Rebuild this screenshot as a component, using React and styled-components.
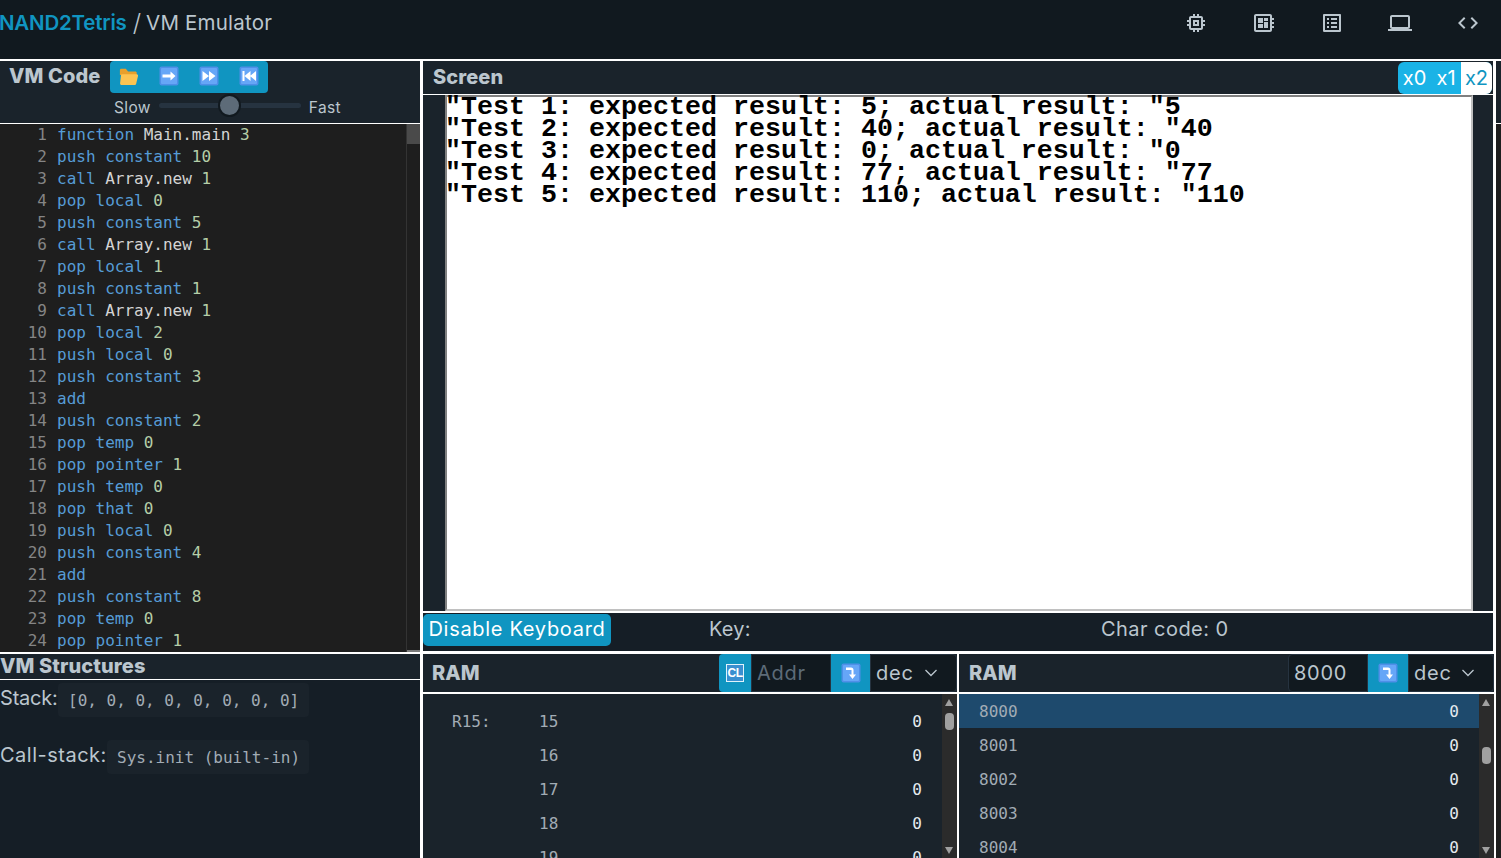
import React from 'react';
import styled, { createGlobalStyle } from 'styled-components';
import {
  MdOutlineMemory, MdOutlineDeveloperBoard, MdOutlineListAlt, MdOutlineLaptop, MdCode,
} from 'react-icons/md';

const UI_FONT = '"Inter", "Noto Sans", sans-serif';
const MONO_FONT = '"DejaVu Sans Mono", "Liberation Mono", monospace';

const GlobalStyle = createGlobalStyle`
  html, body { margin: 0; padding: 0; height: 100%; overflow: hidden; background: #fff; }
  * { box-sizing: border-box; }
  body { font-family: ${UI_FONT}; color: #bbc6ce; }
`;

const Page = styled.div`
  width: 1501px;
  height: 858px;
  display: flex;
  flex-direction: column;
  gap: 2px;
  background: #fff;
  overflow: hidden;
`;

const Header = styled.header`
  height: 59px;
  flex: none;
  display: flex;
  justify-content: space-between;
  align-items: center;
  padding: 0 21px 13px 0;
  background: #11191f;
`;

const Brand = styled.div`
  display: flex;
  align-items: center;
  font-size: 20.5px;
  margin: -2px 0 0 -1px;
`;

const BrandLink = styled.span`
  color: #1095c1;
  font-weight: 600;
  letter-spacing: -0.2px;
`;

const BrandSlash = styled.span`
  color: #bbc6ce;
  font-size: 24px;
  font-weight: 300;
  margin: 0 5px 0 6px;
`;

const BrandPage = styled.span`
  color: #bbc6ce;
  letter-spacing: 0.2px;
`;

const Nav = styled.nav`
  display: flex;
  gap: 44px;
  color: #bbc6ce;
  font-size: 24px;
  svg { display: block; }
`;

const Main = styled.main`
  flex: 1;
  min-height: 0;
  display: grid;
  grid-template-columns: 420px 1070px 5px;
  column-gap: 3px;
`;

const Column = styled.div`
  display: flex;
  flex-direction: column;
  min-height: 0;
  min-width: 0;
`;

const SideStrip = styled(Column)`
  gap: 1px;
`;

const StripTop = styled.div`
  height: 62px;
  background: #1a232b;
`;

const StripBody = styled.div`
  flex: 1;
  background: #1e1e1e;
`;

const PanelHead = styled.div`
  flex: none;
  height: ${(p) => p.$height}px;
  margin-top: ${(p) => p.$top || 0}px;
  display: flex;
  align-items: center;
  justify-content: space-between;
  padding-left: ${(p) => p.$pad || 0}px;
  background: #1a232b;
  border-bottom: ${(p) => p.$rule || 1}px solid #fff;
  box-sizing: content-box;
`;

const Title = styled.h2`
  margin: -2px 0 0;
  font-size: 20px;
  font-weight: 800;
  color: #bbc6ce;
  letter-spacing: 0.1px;
`;

const RamTitle = styled(Title)`
  margin: 0;
`;

const CodeHead = styled.div`
  flex: none;
  height: 62px;
  background: #1a232b;
  border-bottom: 1px solid #fff;
  box-sizing: content-box;
  display: flex;
  flex-direction: column;
`;

const CodeTools = styled.div`
  display: flex;
  align-items: center;
  padding-left: 9px;
  gap: 10px;
  height: 32px;
`;

const Toolbar = styled.div`
  display: flex;
  width: 158px;
  height: 32px;
  padding: 0 9px 2px;
  justify-content: space-between;
  align-items: center;
  background: #1095c1;
  border-radius: 4px;
`;

const SpeedRow = styled.div`
  display: flex;
  align-items: center;
  gap: 8px;
  padding: 0 0 2px 114px;
  font-size: 15.5px;
  letter-spacing: 0.35px;
  height: 30px;
`;

const Track = styled.div`
  position: relative;
  width: 142px;
  height: 5px;
  margin-top: -4px;
  border-radius: 3px;
  background: #263340;
`;

const Thumb = styled.div`
  position: absolute;
  left: 59px;
  top: -9px;
  width: 23px;
  height: 23px;
  border-radius: 50%;
  background: #5d6b78;
  border: 2px solid #11191f;
`;

const Editor = styled.div`
  flex: none;
  height: 528px;
  display: flex;
  background: #1e1e1e;
  font: 16px/22px ${MONO_FONT};
  overflow: hidden;
`;

const EditorLines = styled.div`
  flex: 1;
`;

const EditorLine = styled.div`
  display: flex;
  height: 22px;
  white-space: pre;
`;

const LineNo = styled.span`
  width: 47px;
  margin-right: 10px;
  text-align: right;
  color: #858585;
`;

const Token = styled.span`
  color: ${(p) => (p.$kind === 'num' ? '#b5cea8' : p.$kind === 'id' ? '#d4d4d4' : '#569cd6')};
`;

const EditorRail = styled.div`
  position: relative;
  width: 14px;
  border-left: 1px solid #333;
  &::before {
    content: '';
    position: absolute;
    inset: 0 0 auto 0;
    height: 20px;
    background: #4a4a4a;
  }
  &::after {
    content: '';
    position: absolute;
    inset: auto 0 0 0;
    height: 2px;
    background: #7a7a7a;
  }
`;

const StructBody = styled.div`
  flex: 1;
  display: flex;
  flex-direction: column;
  gap: 23px;
  padding-top: 3px;
  background: #151e26;
  font-size: 20px;
`;

const StructRow = styled.div`
  display: flex;
  align-items: center;
`;

const StructLabel = styled.span`
  width: ${(p) => p.$width}px;
  margin-bottom: 4px;
  letter-spacing: ${(p) => p.$spacing}px;
  white-space: nowrap;
`;

const Chip = styled.code`
  width: ${(p) => p.$width}px;
  height: 34px;
  padding: 0 10px;
  display: flex;
  align-items: center;
  white-space: pre;
  background: #1a232b;
  border-radius: 4px;
  color: #a2acb5;
  font: 16px ${MONO_FONT};
`;

const ScreenBody = styled.div`
  flex: none;
  height: 516px;
  padding: 0 21px 0 22px;
  background: #1a232b;
`;

const ScreenCanvas = styled.div`
  height: 516px;
  width: 1028px;
  background: #fff;
  border-style: solid;
  border-width: 2px;
  border-color: #808080 #c0c0c0 #c0c0c0 #808080;
`;

const ScreenLine = styled.div`
  height: 22px;
  margin-left: -2px;
  color: #000;
  white-space: pre;
  font: 700 26.67px/22px "Liberation Mono", monospace;
  &:first-child { margin-top: -1px; }
`;

const ScaleGroup = styled.div`
  display: flex;
  align-self: stretch;
  margin: 1px 1px 0 0;
  border-radius: 6px;
  overflow: hidden;
  background: #1ab3e6;
`;

const ScaleButton = styled.div`
  width: ${(p) => p.$width}px;
  padding-bottom: 1px;
  display: flex;
  align-items: center;
  justify-content: center;
  font-size: 20px;
  color: ${(p) => (p.$active ? '#1095c1' : '#fff')};
  background: ${(p) => (p.$active ? '#fff' : 'transparent')};
`;

const KeyRow = styled.div`
  flex: none;
  height: 38px;
  margin-top: 2px;
  display: grid;
  grid-template-columns: 286px 392px 1fr;
  align-items: start;
  background: #151e26;
  font-size: 20px;
  line-height: 30px;
`;

const KeyButton = styled.div`
  width: 188px;
  height: 32px;
  margin-top: 1px;
  text-align: center;
  color: #fff;
  background: #1095c1;
  border-radius: 5px;
  letter-spacing: 0.7px;
  white-space: nowrap;
`;

const KeyText = styled.span`
  margin-top: 1px;
  letter-spacing: ${(p) => p.$spacing}px;
`;

const RamRow = styled.div`
  flex: 1;
  min-height: 0;
  margin: 3px -1px 0 0;
  display: grid;
  grid-template-columns: 534px 535px;
  column-gap: 2px;
`;

const RamPanel = styled(Column)`
  background: #1a232b;
`;

const RamControls = styled.div`
  display: flex;
  align-self: stretch;
`;

const CellButton = styled.div`
  width: ${(p) => p.$width}px;
  display: flex;
  align-items: center;
  justify-content: center;
  background: #1095c1;
  border-radius: ${(p) => (p.$first ? '4px 0 0 4px' : '0')};
`;

const ClearMark = styled.span`
  width: 18px;
  height: 18px;
  display: flex;
  align-items: center;
  justify-content: center;
  border: 1px solid #dff3fb;
  background: #3a8fd0;
  color: #fff;
  font: 700 12px "Liberation Sans", sans-serif;
  letter-spacing: -0.6px;
`;

const AddrInput = styled.input`
  width: 80px;
  padding: 0 5px;
  border: 1px solid #263340;
  border-radius: ${(p) => (p.$first ? '4px 0 0 4px' : '0')};
  outline: none;
  background: #11191f;
  color: #bbc6ce;
  font: 20px ${UI_FONT};
  letter-spacing: 0.7px;
  &::placeholder { color: #5d6b78; opacity: 1; }
`;

const FormatSelect = styled.div`
  width: ${(p) => p.$width}px;
  display: flex;
  align-items: center;
  justify-content: space-between;
  padding: 0 18px 0 5px;
  border: 1px solid #263340;
  border-radius: 0 4px 4px 0;
  background: #11191f;
  font-size: 20px;
  letter-spacing: 0.8px;
`;

const RamBody = styled.div`
  flex: 1;
  min-height: 0;
  display: flex;
  overflow: hidden;
`;

const RamList = styled.div`
  flex: 1;
  min-width: 0;
  margin-top: ${(p) => p.$offset || 0}px;
`;

const RamCell = styled.div`
  height: 34px;
  display: flex;
  align-items: center;
  padding: 0 20px 0 ${(p) => (p.$labelled ? 29 : 20)}px;
  background: ${(p) => (p.$selected ? '#1e4a6d' : 'transparent')};
  font: 16px ${MONO_FONT};
  color: #a2acb5;
`;

const RamLabel = styled.span`
  width: 87px;
`;

const RamAddr = styled.span`
  flex: 1;
`;

const RamValue = styled.span`
  color: #e6ebef;
`;

const Scrollbar = styled.div`
  position: relative;
  flex: none;
  width: 15px;
  background: #2b2b2b;
  &::before, &::after {
    content: '';
    position: absolute;
    left: 3px;
    border-left: 4.5px solid transparent;
    border-right: 4.5px solid transparent;
  }
  &::before { top: 5px; border-bottom: 7px solid #a0a0a0; }
  &::after { bottom: 4px; border-top: 7px solid #a0a0a0; }
`;

const ScrollThumb = styled.div`
  position: absolute;
  top: ${(p) => p.$top}px;
  left: 3px;
  width: 9px;
  height: 17px;
  border-radius: 4px;
  background: #a0a0a0;
`;

function KeyIcon({ children }) {
  return (
    <svg width="20" height="20" viewBox="0 0 20 20">
      <rect x="0.5" y="0.5" width="19" height="19" rx="2" fill="#4f8fe8" />
      <rect x="2" y="2" width="16" height="16" rx="1" fill="#66a6f7" />
      {children}
    </svg>
  );
}

const FolderIcon = () => (
  <svg width="20" height="20" viewBox="0 0 22 22">
    <path d="M1 4.500C1 3.700 1.700 3 2.500 3h5l2.500 3h8c.8 0 1.500.7 1.500 1.500V10H1z" fill="#e8a02c" />
    <path d="M3.600 9h15.900c1 0 1.700.9 1.400 1.900l-2 8.600c-.2.9-1 1.500-1.900 1.500H3c-1.100 0-2-1-1.800-2.100L2.200 10.100C2.300 9.500 2.900 9 3.600 9z" fill="#fcc452" />
  </svg>
);

const StepIcon = () => (
  <KeyIcon>
    <path d="M3.500 8.500h8V5.500l5 4.500-5 4.500v-3h-8z" fill="#fff" />
  </KeyIcon>
);

const FastForwardIcon = () => (
  <KeyIcon>
    <path d="M3.500 5l6.500 5-6.500 5zM10 5l6.500 5-6.500 5z" fill="#fff" />
  </KeyIcon>
);

const RewindIcon = () => (
  <KeyIcon>
    <path d="M3.500 5h2v10h-2zM11.500 5l-6 5 6 5zM17 5l-6 5 6 5z" fill="#fff" />
  </KeyIcon>
);

const JumpIcon = () => (
  <KeyIcon>
    <path d="M5 4.500h5c1.700 0 2.500 1 2.500 2.500v4.500H15L11.500 16 8 11.500h2.500V7H5z" fill="#fff" />
  </KeyIcon>
);

const Chevron = () => (
  <svg width="14" height="8" viewBox="0 0 14 8" fill="none" stroke="#bbc6ce" strokeWidth="1.300">
    <path d="M1.500 1l5.500 5.500L12.500 1" />
  </svg>
);

const CODE = [
  'function Main.main 3', 'push constant 10', 'call Array.new 1', 'pop local 0',
  'push constant 5', 'call Array.new 1', 'pop local 1', 'push constant 1',
  'call Array.new 1', 'pop local 2', 'push local 0', 'push constant 3',
  'add', 'push constant 2', 'pop temp 0', 'pop pointer 1',
  'push temp 0', 'pop that 0', 'push local 0', 'push constant 4',
  'add', 'push constant 8', 'pop temp 0', 'pop pointer 1',
];

const SCREEN_TEXT = [
  '"Test 1: expected result: 5; actual result: "5',
  '"Test 2: expected result: 40; actual result: "40',
  '"Test 3: expected result: 0; actual result: "0',
  '"Test 4: expected result: 77; actual result: "77',
  '"Test 5: expected result: 110; actual result: "110',
];

function tokenKind(word) {
  if (/^\d+$/.test(word)) return 'num';
  if (word.includes('.')) return 'id';
  return 'kw';
}

function CodeLine({ text, no }) {
  const words = text.split(' ');
  return (
    <EditorLine>
      <LineNo>{no}</LineNo>
      {words.map((word, i) => (
        <Token $kind={tokenKind(word)} key={i}>{i > 0 ? ` ${word}` : word}</Token>
      ))}
    </EditorLine>
  );
}

function RamView({ cells, offset, thumbTop, labelled, selected, controls, pad }) {
  return (
    <RamPanel>
      <PanelHead $height={38} $pad={pad} $rule={2}>
        <RamTitle>RAM</RamTitle>
        <RamControls>{controls}</RamControls>
      </PanelHead>
      <RamBody>
        <RamList $offset={offset}>
          {cells.map((cell) => (
            <RamCell key={cell.addr} $labelled={labelled} $selected={cell.addr === selected}>
              {labelled && <RamLabel>{cell.label}</RamLabel>}
              <RamAddr>{cell.addr}</RamAddr>
              <RamValue>0</RamValue>
            </RamCell>
          ))}
        </RamList>
        <Scrollbar><ScrollThumb $top={thumbTop} /></Scrollbar>
      </RamBody>
    </RamPanel>
  );
}

export default function App() {
  return (
    <Page>
      <GlobalStyle />
      <Header>
        <Brand>
          <BrandLink>NAND2Tetris</BrandLink>
          <BrandSlash>/</BrandSlash>
          <BrandPage>VM Emulator</BrandPage>
        </Brand>
        <Nav>
          <MdOutlineMemory />
          <MdOutlineDeveloperBoard />
          <MdOutlineListAlt />
          <MdOutlineLaptop />
          <MdCode />
        </Nav>
      </Header>
      <Main>
        <Column>
          <CodeHead>
            <CodeTools>
              <Title>VM Code</Title>
              <Toolbar>
                <FolderIcon />
                <StepIcon />
                <FastForwardIcon />
                <RewindIcon />
              </Toolbar>
            </CodeTools>
            <SpeedRow>
              <span>Slow</span>
              <Track><Thumb /></Track>
              <span>Fast</span>
            </SpeedRow>
          </CodeHead>
          <Editor>
            <EditorLines>
              {CODE.map((text, i) => <CodeLine text={text} no={i + 1} key={i} />)}
            </EditorLines>
            <EditorRail />
          </Editor>
          <PanelHead $height={25} $top={2}>
            <Title>VM Structures</Title>
          </PanelHead>
          <StructBody>
            <StructRow>
              <StructLabel $width={58} $spacing={-0.2}>Stack:</StructLabel>
              <Chip $width={251}>[0, 0, 0, 0, 0, 0, 0, 0]</Chip>
            </StructRow>
            <StructRow>
              <StructLabel $width={107} $spacing={0.5}>Call-stack:</StructLabel>
              <Chip $width={202}>Sys.init (built-in)</Chip>
            </StructRow>
          </StructBody>
        </Column>
        <Column>
          <PanelHead $height={33} $pad={10}>
            <Title>Screen</Title>
            <ScaleGroup>
              <ScaleButton $width={33}>x0</ScaleButton>
              <ScaleButton $width={30}>x1</ScaleButton>
              <ScaleButton $width={31} $active>x2</ScaleButton>
            </ScaleGroup>
          </PanelHead>
          <ScreenBody>
            <ScreenCanvas>
              {SCREEN_TEXT.map((line) => <ScreenLine key={line}>{line}</ScreenLine>)}
            </ScreenCanvas>
          </ScreenBody>
          <KeyRow>
            <KeyButton>Disable Keyboard</KeyButton>
            <KeyText $spacing={0.2}>Key:</KeyText>
            <KeyText $spacing={0.45}>Char code: 0</KeyText>
          </KeyRow>
          <RamRow>
            <RamView
              labelled
              pad={9}
              offset={-24}
              thumbTop={19}
              cells={[
                { addr: 14, label: 'R14:' }, { addr: 15, label: 'R15:' }, { addr: 16 },
                { addr: 17 }, { addr: 18 }, { addr: 19 },
              ]}
              controls={(
                <>
                  <CellButton $width={32} $first><ClearMark>CL</ClearMark></CellButton>
                  <AddrInput placeholder="Addr" readOnly />
                  <CellButton $width={39}><JumpIcon /></CellButton>
                  <FormatSelect $width={87}>dec<Chevron /></FormatSelect>
                </>
              )}
            />
            <RamView
              pad={10}
              selected={8000}
              thumbTop={53}
              cells={[{ addr: 8000 }, { addr: 8001 }, { addr: 8002 }, { addr: 8003 }, { addr: 8004 }]}
              controls={(
                <>
                  <AddrInput $first value="8000" readOnly />
                  <CellButton $width={40}><JumpIcon /></CellButton>
                  <FormatSelect $width={86}>dec<Chevron /></FormatSelect>
                </>
              )}
            />
          </RamRow>
        </Column>
        <SideStrip>
          <StripTop />
          <StripBody />
        </SideStrip>
      </Main>
    </Page>
  );
}
